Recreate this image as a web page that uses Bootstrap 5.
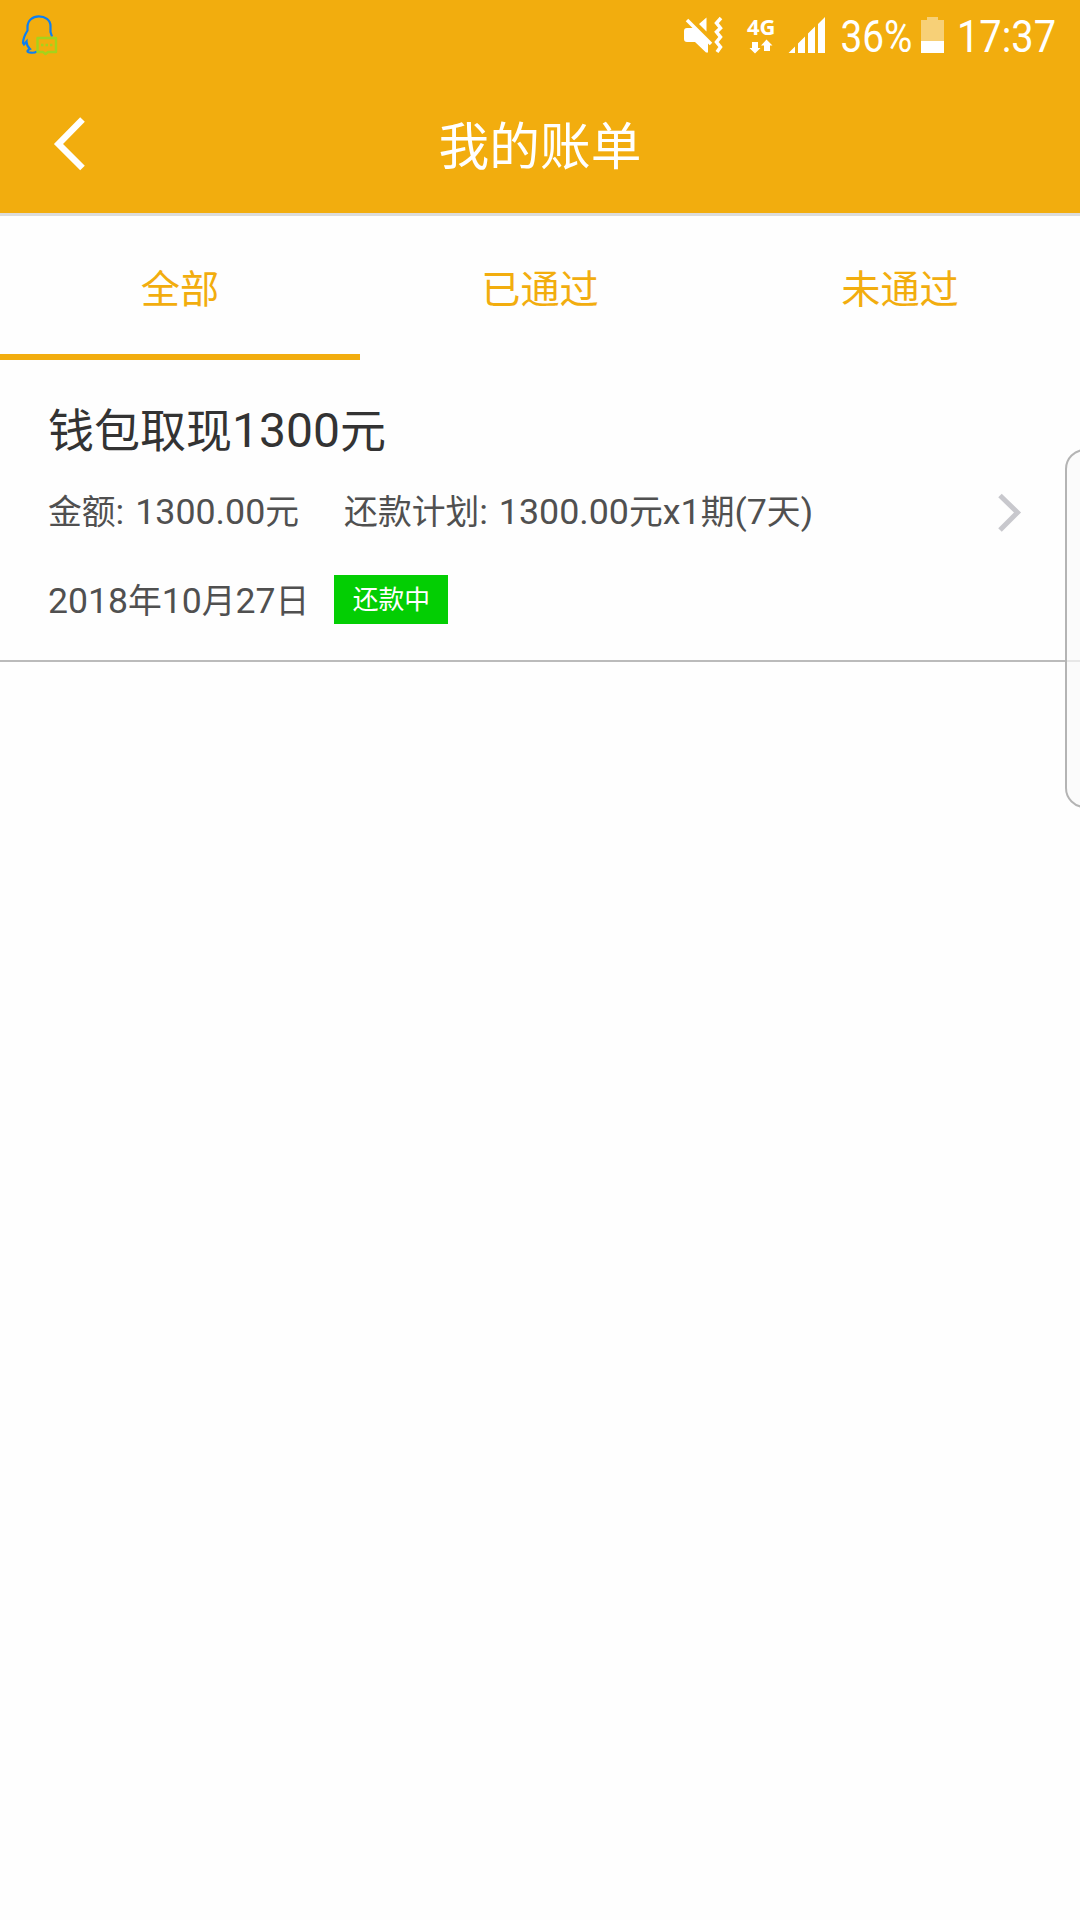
<!DOCTYPE html>
<html lang="zh-CN">
<head>
<meta charset="utf-8">
<meta name="viewport" content="width=device-width, initial-scale=1">
<title>我的账单</title>
<link href="https://cdn.jsdelivr.net/npm/bootstrap@5.3.0/dist/css/bootstrap.min.css" rel="stylesheet">
<style>
:root { --brand: #f2ad0e; }
body { font-family: Roboto, "Noto Sans CJK SC", sans-serif; background: #fefefe; min-height: 1920px; overflow-x: hidden; }
svg { display: block; flex: none; }
.top-area { background: var(--brand); height: 216px; border-bottom: 3px solid #dcdcdc; }
.status-bar { height: 72px; }
.title-bar { height: 141px; padding-top: 1px; }
.page-title { font-size: 50.7px; line-height: 60px; font-weight: 400; padding-top: 9px; }
.side-slot { width: 140px; padding-left: 51px; }
.bill-tabs { height: 144px; }
.bill-tabs .nav-link { color: var(--brand); font-size: 39.2px; line-height: 58px; padding: 45px 0 35px; border-radius: 0; border-bottom: 6px solid transparent; }
.bill-tabs .nav-link.active { border-bottom-color: var(--brand); }
.bill-row { height: 302px; border: 0; border-bottom: 2px solid #bbb; border-radius: 0; background: transparent; padding: 41px 57px 0 48px; color: #505050; }
.bill-name { font-size: 46px; line-height: 60px; color: #333; font-weight: 400; }
.bill-name .latin { font-size: 48px; }
.bill-meta { font-size: 33.8px; line-height: 50px; white-space: pre; }
.bill-meta .latin { font-size: 35.6px; }
.meta-line { height: 50px; margin-top: 26px; word-spacing: 2px; }
.meta-line .latin { font-size: 35.8px; }
.date-line { height: 50px; margin-top: 39px; }
.plan-text { margin-left: 45px; }
.state-tag { width: 114px; height: 49px; line-height: 50px; margin: 0 0 3px 25px; background: #03ce03; font-size: 25.8px; }
.edge-handle { position: absolute; left: 1065px; top: 449px; width: 40px; height: 359px; border: 2px solid #b4b4b4; border-radius: 22px; background: rgba(250,250,250,.7); }
.clip-edge { position: relative; overflow: hidden; height: 1920px; }
</style>
<script src="https://cdn.jsdelivr.net/npm/bootstrap@5.3.0/dist/js/bootstrap.bundle.min.js"></script>
</head>
<body>
<div class="clip-edge">
<header class="top-area text-white">
  <div class="status-bar d-flex justify-content-between">
    <svg width="80" height="72" fill="none">
      <path d="M52 36.500L50.500 32V26C50.500 20 45 16.300 38.800 16.300S27.500 20.500 27.500 27V30.500C25 34.500 23 38 23 43L24 44.500L26.500 41.500C26.500 44 28 47 30 49C26.500 50.500 26.500 52.500 31 52.700C34 53 36 52 37 51.300" stroke="#0d7ff2" stroke-width="2.200"/>
      <path d="M37.500 38H56V52H48L45.500 54L43 52H37.500Z" stroke="#a5d31b" stroke-width="2.400" stroke-linejoin="round"/>
      <path d="M41 45h2.500M45.500 45h2.500M50 45h2.500" stroke="#a5d31b" stroke-width="2.400"/>
    </svg>
    <svg width="410" height="72" viewBox="670 0 410 72" fill="#fff">
      <path d="M687 28H695L708 41V52.500H706L695 42H687Q684 42 684 39V31Q684 28 687 28ZM706.500 17.500V31.500L699 24Z"/>
      <path d="M687 20L711 44" stroke="#fff" stroke-width="3.600"/>
      <path d="M721 18L716.500 23L720.500 28L716.500 32L720.500 37L716.500 42L720.500 47L717 52" fill="none" stroke="#fff" stroke-width="3.500"/>
      <text x="747" y="34.800" font-family="Noto Sans" font-weight="700" font-size="22" textLength="28.500" lengthAdjust="spacingAndGlyphs">4G</text>
      <path d="M752 42h6v6h2.500L755 53.500L749.500 48H752ZM764 51h6v-5.500h2.500L766.500 39.500L761 45.500H764Z"/>
      <path d="M788.500 53L795 46.500V53ZM798 53V43.500L805 36.500V53ZM808 53V33.500L815 26.500V53ZM818 53V24L825 17V53Z"/>
      <text x="840.500" y="52" font-family="Roboto" font-size="45" textLength="72" lengthAdjust="spacingAndGlyphs">36%</text>
      <path d="M927 17H938V20H944V41H921V20H927Z" fill="#f7d077"/>
      <path d="M921 41H944V53H921Z"/>
      <text x="957" y="52" font-family="Roboto" font-size="45" textLength="99" lengthAdjust="spacingAndGlyphs">17:37</text>
    </svg>
  </div>
  <div class="title-bar d-flex align-items-center justify-content-between">
    <div class="side-slot">
      <svg width="36" height="56"><path d="M31.500 4.500L7.500 29L31.500 53" fill="none" stroke="#fff" stroke-width="6.500"/></svg>
    </div>
    <h1 class="page-title mb-0">我的账单</h1>
    <div class="side-slot"></div>
  </div>
</header>
<nav class="bill-tabs nav nav-justified flex-nowrap">
  <a class="nav-link active w-100" href="#">全部</a>
  <a class="nav-link w-100" href="#">已通过</a>
  <a class="nav-link w-100" href="#">未通过</a>
</nav>
<main>
  <div class="bill-row">
    <h2 class="bill-name m-0">钱包取现<span class="latin">1300</span>元</h2>
    <div class="meta-line bill-meta d-flex align-items-center">
      <span>金额<span class="latin">: 1300.00</span>元</span>
      <span class="plan-text">还款计划<span class="latin">: 1300.00</span>元<span class="latin">x1</span>期<span class="latin">(7</span>天<span class="latin">)</span></span>
      <svg class="ms-auto" width="26" height="42"><path d="M3 4.500L20.500 21.500L3 39" fill="none" stroke="#c8c8cd" stroke-width="5"/></svg>
    </div>
    <div class="date-line bill-meta d-flex align-items-center">
      <span><span class="latin">2018</span>年<span class="latin">10</span>月<span class="latin">27</span>日</span>
      <span class="state-tag text-white text-center">还款中</span>
    </div>
  </div>
</main>
<div class="edge-handle"></div>
</div>
</body>
</html>
